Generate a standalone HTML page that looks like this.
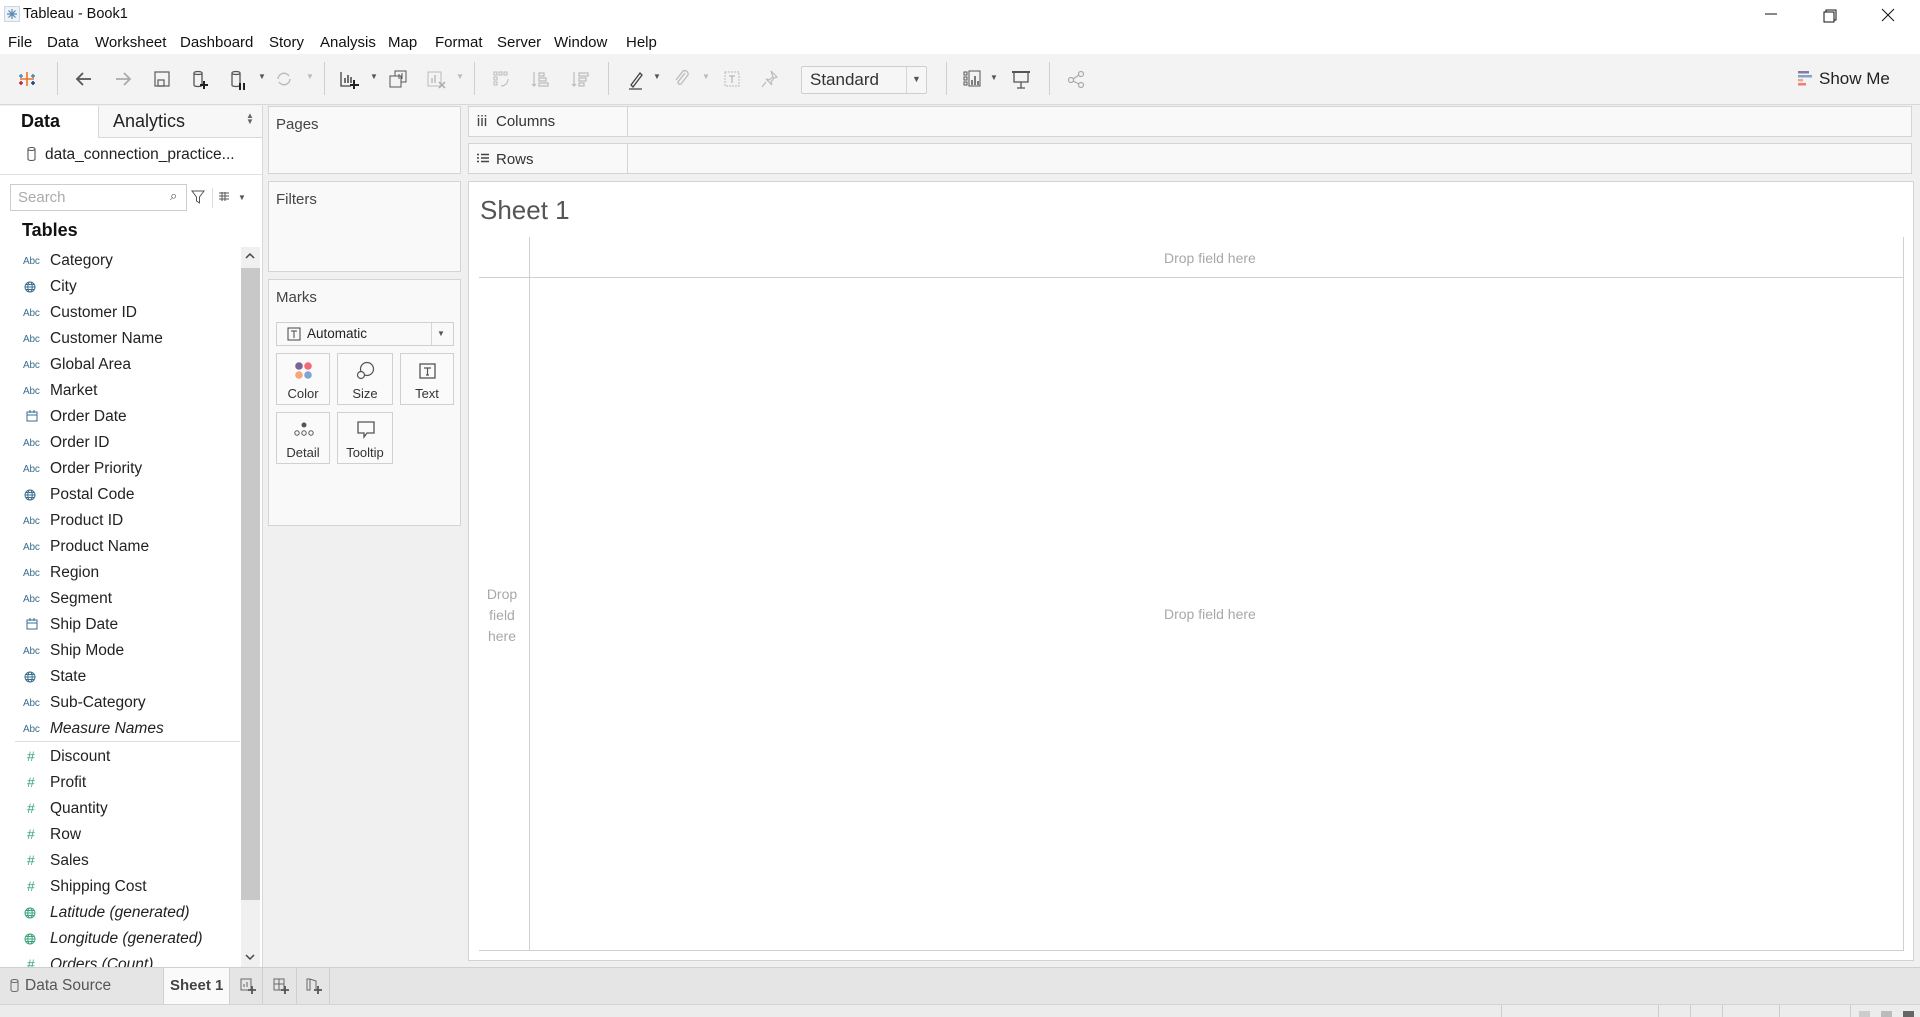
<!DOCTYPE html>
<html><head><meta charset="utf-8">
<style>
*{box-sizing:border-box;margin:0;padding:0}
body{width:1920px;height:1017px;overflow:hidden;background:#f0f0f0;font-family:"Liberation Sans",sans-serif;color:#333;position:relative}
.a{position:absolute}
.t{position:absolute;white-space:nowrap}
.menu span{position:absolute;top:34px;font-size:15px;color:#111}
.ic{position:absolute;top:69px}
.sep{position:absolute;top:62px;width:1px;height:33px;background:#cfcfcf}
.f{position:absolute;left:0;width:240px;height:26px;font-size:15.5px;color:#222}
.f .n{position:absolute;left:50px;top:4px}
.f .i{position:absolute;left:23px;top:8px;font-size:10px;color:#3b6e8f;letter-spacing:-.2px}
.f.m .i{color:#3aa57a;font-size:14px;top:4px;left:27px;font-weight:normal}
.it .n{font-style:italic}
.btn{position:absolute;background:#fafafa;border:1px solid #d0d0d0;width:54px;height:52px;font-size:13px;text-align:center}
.btn span{position:absolute;left:0;right:0;top:32px}
.drop{position:absolute;font-size:14px;color:#a8a8a8}
</style></head><body>
<!-- title bar -->
<div class="a" style="left:0;top:0;width:1920px;height:54px;background:#fff"></div>
<svg class="a" style="left:4px;top:6px" width="16" height="16"><rect x="0.5" y="0.5" width="15" height="15" fill="#eef3f8" stroke="#c9d6e2"/><g stroke="#5b87b5" stroke-width="1.2"><path d="M8 3v10M3 8h10M4.5 4.5l7 7M11.5 4.5l-7 7"/></g></svg>
<div class="t" style="left:23px;top:6px;font-size:14.5px;color:#111">Tableau - Book1</div>
<svg class="a" style="left:1760px;top:8px" width="150" height="16"><path d="M5 6h12" stroke="#111"/><rect x="64" y="4" width="10" height="10" fill="none" stroke="#111"/><path d="M66 4V2h10v10h-2" fill="none" stroke="#111"/><path d="M122 1l12 12M134 1l-12 12" stroke="#111"/></svg>
<div class="menu"><span style="left:8px">File</span><span style="left:47px">Data</span><span style="left:95px">Worksheet</span><span style="left:180px">Dashboard</span><span style="left:269px">Story</span><span style="left:320px">Analysis</span><span style="left:388px">Map</span><span style="left:435px">Format</span><span style="left:497px">Server</span><span style="left:554px">Window</span><span style="left:626px">Help</span></div>
<!-- toolbar -->
<div class="a" style="left:0;top:54px;width:1920px;height:51px;background:#f3f3f3;border-bottom:1px solid #d8d8d8"></div>
<svg class="ic" style="left:17px" width="20" height="20"><g stroke-width="1.6"><path d="M10 3v14M3 10h14" stroke="#e8762b"/><path d="M4 5v4M2 7h4" stroke="#5b87b5"/><path d="M16 5v4M14 7h4" stroke="#59879b"/><path d="M4 12v4M2 14h4" stroke="#c72035"/><path d="M16 12v4M14 14h4" stroke="#1f447e"/></g></svg>
<div class="sep" style="left:57px"></div>
<svg class="ic" style="left:74px" width="20" height="20"><path d="M17 10H3M9 4l-6 6 6 6" fill="none" stroke="#555" stroke-width="1.8"/></svg>
<svg class="ic" style="left:113px" width="20" height="20"><path d="M3 10h14M11 4l6 6-6 6" fill="none" stroke="#aaa" stroke-width="1.8"/></svg>
<svg class="ic" style="left:152px" width="20" height="20"><rect x="3" y="3" width="14" height="14" fill="none" stroke="#666" stroke-width="1.3"/><rect x="6" y="11" width="6" height="6" fill="none" stroke="#666" stroke-width="1.3"/></svg>
<svg class="ic" style="left:190px" width="20" height="22"><path d="M4 4v12c0 2 8 2 8 0V4c0-2-8-2-8 0zM4 4c0 2 8 2 8 0" fill="none" stroke="#555" stroke-width="1.3"/><path d="M14 12v8M10 16h8" stroke="#222" stroke-width="2"/></svg>
<svg class="ic" style="left:228px" width="20" height="22"><path d="M4 4v12c0 2 8 2 8 0V4c0-2-8-2-8 0zM4 4c0 2 8 2 8 0" fill="none" stroke="#555" stroke-width="1.3"/><path d="M12 14v7M16 14v7" stroke="#222" stroke-width="2"/></svg>
<div class="t" style="left:258px;top:72px;font-size:8px;color:#555">▼</div>
<svg class="ic" style="left:274px" width="20" height="20"><path d="M4 10a6 6 0 0 1 11-3M16 10a6 6 0 0 1-11 3" fill="none" stroke="#bbb" stroke-width="1.5"/></svg>
<div class="t" style="left:306px;top:72px;font-size:8px;color:#bbb">▼</div>
<div class="sep" style="left:324px"></div>
<svg class="ic" style="left:338px" width="22" height="22"><path d="M3 3v14h10" fill="none" stroke="#444" stroke-width="1.3"/><path d="M7 14V9M10 14V6M13 14V8" stroke="#444" stroke-width="1.5"/><path d="M16 11v9M12 16h9" stroke="#222" stroke-width="2"/></svg>
<div class="t" style="left:370px;top:72px;font-size:8px;color:#555">▼</div>
<svg class="ic" style="left:388px" width="22" height="22"><rect x="7" y="2" width="11" height="11" fill="none" stroke="#555"/><rect x="2" y="7" width="11" height="11" fill="#f3f3f3" stroke="#555"/><path d="M11 10V5M14 10V4" stroke="#555"/></svg>
<svg class="ic" style="left:426px" width="22" height="22"><rect x="2" y="3" width="13" height="14" fill="none" stroke="#bbb"/><path d="M6 14V9M9 14V6" stroke="#bbb" stroke-width="1.5"/><path d="M13 13l6 6M19 13l-6 6" stroke="#aaa" stroke-width="1.5"/></svg>
<div class="t" style="left:456px;top:72px;font-size:8px;color:#bbb">▼</div>
<div class="sep" style="left:474px"></div>
<svg class="ic" style="left:491px" width="22" height="22"><g fill="none" stroke="#bbb"><rect x="3" y="3" width="3" height="3"/><rect x="8" y="3" width="3" height="3"/><rect x="13" y="3" width="3" height="3"/><rect x="3" y="8" width="3" height="3"/><rect x="3" y="13" width="3" height="3"/><path d="M10 17c4 0 7-3 7-7"/></g></svg>
<svg class="ic" style="left:530px" width="22" height="22"><g fill="none" stroke="#bbb" stroke-width="1.2"><path d="M4 3v14M2 15l2 2 2-2"/><rect x="9" y="4" width="5" height="3"/><rect x="9" y="9" width="7" height="3"/><rect x="9" y="14" width="9" height="3"/></g></svg>
<svg class="ic" style="left:570px" width="22" height="22"><g fill="none" stroke="#bbb" stroke-width="1.2"><path d="M4 3v14M2 15l2 2 2-2"/><rect x="9" y="4" width="9" height="3"/><rect x="9" y="9" width="7" height="3"/><rect x="9" y="14" width="5" height="3"/></g></svg>
<div class="sep" style="left:608px"></div>
<svg class="ic" style="left:626px" width="22" height="22"><path d="M5 16l9-12 2 2-9 12zM3 20h13" fill="none" stroke="#444" stroke-width="1.3"/></svg>
<div class="t" style="left:653px;top:72px;font-size:8px;color:#555">▼</div>
<svg class="ic" style="left:671px" width="22" height="22"><path d="M14 4l-7 9a2 2 0 0 0 3 2l7-9a3.5 3.5 0 0 0-5-4l-7 9" fill="none" stroke="#bbb" stroke-width="1.3"/></svg>
<div class="t" style="left:702px;top:72px;font-size:8px;color:#bbb">▼</div>
<svg class="ic" style="left:722px" width="22" height="22"><rect x="3" y="3" width="14" height="14" fill="none" stroke="#bbb" stroke-dasharray="2 1"/><path d="M7 7h6M10 7v7" stroke="#aaa"/></svg>
<svg class="ic" style="left:759px" width="22" height="22"><path d="M12 2l6 6-3 1-3 4 1 3-6-6 3 1 4-3zM7 13l-4 5" fill="none" stroke="#bbb" stroke-width="1.2"/></svg>
<div class="a" style="left:801px;top:66px;width:126px;height:28px;border:1px solid #cfcfcf;background:#f6f6f6;border-radius:2px"></div>
<div class="a" style="left:906px;top:67px;width:1px;height:26px;background:#d4d4d4"></div>
<div class="t" style="left:810px;top:70px;font-size:17px;color:#333">Standard</div>
<div class="t" style="left:912px;top:74px;font-size:9px;color:#555">▼</div>
<div class="sep" style="left:946px"></div>
<svg class="ic" style="left:962px" width="22" height="22"><g fill="none" stroke="#555"><rect x="2" y="3" width="3" height="3"/><rect x="2" y="8" width="3" height="3"/><rect x="2" y="13" width="3" height="3"/><rect x="7" y="2" width="11" height="15"/></g><path d="M10 16v-5M13 16V7M16 16v-4" stroke="#555" stroke-width="1.5"/></svg>
<div class="t" style="left:990px;top:73px;font-size:8px;color:#555">▼</div>
<svg class="ic" style="left:1010px" width="22" height="22"><path d="M2 3h18" stroke="#555" stroke-width="2"/><path d="M4 3v10h14V3M11 13v6M7 19h8" fill="none" stroke="#555" stroke-width="1.3"/></svg>
<div class="sep" style="left:1049px"></div>
<svg class="ic" style="left:1066px" width="22" height="22"><g fill="none" stroke="#aaa" stroke-width="1.2"><circle cx="5" cy="11" r="2.5"/><circle cx="15" cy="5" r="2.5"/><circle cx="15" cy="16" r="2.5"/><path d="M7 10l6-4M7 12l6 3"/></g></svg>
<svg class="a" style="left:1798px;top:70px" width="15" height="16"><rect x="0" y="1" width="11" height="2.5" fill="#8a7aa0"/><rect x="0" y="5" width="14" height="2.5" fill="#7fa6d0"/><rect x="0" y="9" width="5" height="2.5" fill="#f0a878"/><rect x="0" y="13" width="8" height="2.5" fill="#f07a80"/></svg>
<div class="t" style="left:1819px;top:69px;font-size:17px;color:#222">Show Me</div>

<!-- left data pane -->
<div class="a" style="left:0;top:106px;width:263px;height:861px;background:#fff;border-right:1px solid #d8d8d8"></div>
<div class="a" style="left:98px;top:106px;width:164px;height:32px;background:#f7f7f7;border-left:1px solid #d8d8d8;border-bottom:1px solid #d8d8d8"></div>
<div class="t" style="left:21px;top:111px;font-size:18px;font-weight:bold;color:#111">Data</div>
<div class="t" style="left:113px;top:111px;font-size:18px;color:#222">Analytics</div>
<div class="t" style="left:246px;top:113px;font-size:8px;color:#666;line-height:6px">▲<br>▼</div>
<div class="a" style="left:0;top:174px;width:262px;height:1px;background:#e0e0e0"></div>
<svg class="a" style="left:26px;top:146px" width="12" height="17"><path d="M2 3v10c0 2 7 2 7 0V3c0-2-7-2-7 0zM2 3c0 2 7 2 7 0" fill="none" stroke="#555" stroke-width="1.1"/></svg>
<div class="t" style="left:45px;top:146px;font-size:15.5px;color:#222">data_connection_practice...</div>
<div class="a" style="left:10px;top:184px;width:177px;height:27px;border:1px solid #ccc;background:#fff"></div>
<div class="t" style="left:18px;top:189px;font-size:15px;color:#aaa">Search</div>
<div class="t" style="left:170px;top:188px;font-size:13px;color:#555">⌕</div>
<svg class="a" style="left:191px;top:190px" width="14" height="14"><path d="M1 1h12L8.5 7v6L5.5 11V7z" fill="none" stroke="#555"/></svg>
<div class="a" style="left:212px;top:188px;width:1px;height:20px;background:#ddd"></div>
<svg class="a" style="left:218px;top:192px" width="12" height="10"><g stroke="#555"><path d="M1 1h10M1 4h10M1 7h10M4 0v9M7 0v9"/></g></svg>
<div class="t" style="left:238px;top:193px;font-size:8px;color:#555">▼</div>
<div class="t" style="left:22px;top:220px;font-size:18px;font-weight:bold;color:#111">Tables</div>
<!-- scrollbar -->
<div class="a" style="left:241px;top:247px;width:19px;height:720px;background:#f0f0f0"></div>
<div class="a" style="left:241px;top:268px;width:19px;height:632px;background:#c8c8c8"></div>
<svg class="a" style="left:244px;top:251px" width="12" height="10"><path d="M2 7l4-4 4 4" fill="none" stroke="#444" stroke-width="1.5"/></svg>
<svg class="a" style="left:244px;top:952px" width="12" height="10"><path d="M2 3l4 4 4-4" fill="none" stroke="#444" stroke-width="1.5"/></svg>
<div class="f" style="top:248px"><span class="i">Abc</span><span class="n">Category</span></div>
<div class="f" style="top:274px"><svg class="a" style="left:24px;top:7px" width="12" height="12"><g fill="none" stroke="#3b6e8f"><circle cx="6" cy="6" r="5"/><ellipse cx="6" cy="6" rx="2.2" ry="5"/><path d="M1 6h10M2 3.5h8M2 8.5h8"/></g></svg><span class="n">City</span></div>
<div class="f" style="top:300px"><span class="i">Abc</span><span class="n">Customer ID</span></div>
<div class="f" style="top:326px"><span class="i">Abc</span><span class="n">Customer Name</span></div>
<div class="f" style="top:352px"><span class="i">Abc</span><span class="n">Global Area</span></div>
<div class="f" style="top:378px"><span class="i">Abc</span><span class="n">Market</span></div>
<div class="f" style="top:404px"><svg class="a" style="left:26px;top:6px" width="12" height="12"><rect x="1" y="2" width="10" height="9" fill="none" stroke="#3b6e8f"/><path d="M1 5h10M4 0v3M8 0v3" stroke="#3b6e8f"/></svg><span class="n">Order Date</span></div>
<div class="f" style="top:430px"><span class="i">Abc</span><span class="n">Order ID</span></div>
<div class="f" style="top:456px"><span class="i">Abc</span><span class="n">Order Priority</span></div>
<div class="f" style="top:482px"><svg class="a" style="left:24px;top:7px" width="12" height="12"><g fill="none" stroke="#3b6e8f"><circle cx="6" cy="6" r="5"/><ellipse cx="6" cy="6" rx="2.2" ry="5"/><path d="M1 6h10M2 3.5h8M2 8.5h8"/></g></svg><span class="n">Postal Code</span></div>
<div class="f" style="top:508px"><span class="i">Abc</span><span class="n">Product ID</span></div>
<div class="f" style="top:534px"><span class="i">Abc</span><span class="n">Product Name</span></div>
<div class="f" style="top:560px"><span class="i">Abc</span><span class="n">Region</span></div>
<div class="f" style="top:586px"><span class="i">Abc</span><span class="n">Segment</span></div>
<div class="f" style="top:612px"><svg class="a" style="left:26px;top:6px" width="12" height="12"><rect x="1" y="2" width="10" height="9" fill="none" stroke="#3b6e8f"/><path d="M1 5h10M4 0v3M8 0v3" stroke="#3b6e8f"/></svg><span class="n">Ship Date</span></div>
<div class="f" style="top:638px"><span class="i">Abc</span><span class="n">Ship Mode</span></div>
<div class="f" style="top:664px"><svg class="a" style="left:24px;top:7px" width="12" height="12"><g fill="none" stroke="#3b6e8f"><circle cx="6" cy="6" r="5"/><ellipse cx="6" cy="6" rx="2.2" ry="5"/><path d="M1 6h10M2 3.5h8M2 8.5h8"/></g></svg><span class="n">State</span></div>
<div class="f" style="top:690px"><span class="i">Abc</span><span class="n">Sub-Category</span></div>
<div class="f it" style="top:716px"><span class="i">Abc</span><span class="n">Measure Names</span></div>
<div class="a" style="left:15px;top:741px;width:225px;height:1px;background:#ddd"></div>
<div class="f m" style="top:744px"><span class="i">#</span><span class="n">Discount</span></div>
<div class="f m" style="top:770px"><span class="i">#</span><span class="n">Profit</span></div>
<div class="f m" style="top:796px"><span class="i">#</span><span class="n">Quantity</span></div>
<div class="f m" style="top:822px"><span class="i">#</span><span class="n">Row</span></div>
<div class="f m" style="top:848px"><span class="i">#</span><span class="n">Sales</span></div>
<div class="f m" style="top:874px"><span class="i">#</span><span class="n">Shipping Cost</span></div>
<div class="f it" style="top:900px"><svg class="a" style="left:24px;top:7px" width="12" height="12"><g fill="none" stroke="#3aa57a"><circle cx="6" cy="6" r="5"/><ellipse cx="6" cy="6" rx="2.2" ry="5"/><path d="M1 6h10M2 3.5h8M2 8.5h8"/></g></svg><span class="n">Latitude (generated)</span></div>
<div class="f it" style="top:926px"><svg class="a" style="left:24px;top:7px" width="12" height="12"><g fill="none" stroke="#3aa57a"><circle cx="6" cy="6" r="5"/><ellipse cx="6" cy="6" rx="2.2" ry="5"/><path d="M1 6h10M2 3.5h8M2 8.5h8"/></g></svg><span class="n">Longitude (generated)</span></div>
<div class="a" style="left:0;top:952px;width:240px;height:15px;overflow:hidden"><div class="f m it" style="top:0"><span class="i">#</span><span class="n">Orders (Count)</span></div></div>

<!-- pages / filters / marks -->
<div class="a" style="left:268px;top:106px;width:193px;height:68px;background:#f9f9f9;border:1px solid #d4d4d4"></div>
<div class="t" style="left:276px;top:116px;font-size:15px;color:#444">Pages</div>
<div class="a" style="left:268px;top:181px;width:193px;height:91px;background:#f9f9f9;border:1px solid #d4d4d4"></div>
<div class="t" style="left:276px;top:191px;font-size:15px;color:#444">Filters</div>
<div class="a" style="left:268px;top:279px;width:193px;height:247px;background:#f9f9f9;border:1px solid #d4d4d4"></div>
<div class="t" style="left:276px;top:289px;font-size:15px;color:#444">Marks</div>
<div class="a" style="left:276px;top:322px;width:178px;height:24px;border:1px solid #d0d0d0;background:#f9f9f9"></div>
<div class="a" style="left:431px;top:323px;width:1px;height:22px;background:#d4d4d4"></div>
<svg class="a" style="left:287px;top:327px" width="14" height="14"><rect x="1" y="1" width="12" height="12" fill="none" stroke="#444"/><path d="M4 4h6M7 4v7" stroke="#444"/></svg>
<div class="t" style="left:307px;top:326px;font-size:13.5px;color:#222">Automatic</div>
<div class="t" style="left:437px;top:329px;font-size:8px;color:#555">▼</div>
<div class="btn" style="left:276px;top:353px"><svg class="a" style="left:17px;top:7px" width="20" height="20"><circle cx="5" cy="5" r="3.8" fill="#7b6494"/><circle cx="14" cy="5" r="3.8" fill="#f26a78"/><circle cx="5" cy="14" r="3.8" fill="#f5a77a"/><circle cx="14" cy="14" r="3.8" fill="#7fa6d0"/></svg><span>Color</span></div>
<div class="btn" style="left:337px;top:353px;width:56px"><svg class="a" style="left:18px;top:7px" width="20" height="20"><circle cx="11" cy="8" r="6.5" fill="none" stroke="#555" stroke-width="1.2"/><circle cx="5" cy="14" r="3.5" fill="#f9f9f9" stroke="#555" stroke-width="1.2"/></svg><span>Size</span></div>
<div class="btn" style="left:400px;top:353px"><svg class="a" style="left:17px;top:8px" width="20" height="20"><rect x="2" y="2" width="15" height="14" fill="none" stroke="#555" stroke-width="1.3"/><path d="M6 6h7M9.5 6v7M8 13h3" stroke="#555" stroke-width="1.2"/></svg><span>Text</span></div>
<div class="btn" style="left:276px;top:412px"><svg class="a" style="left:15px;top:8px" width="24" height="18"><circle cx="12" cy="4" r="2.5" fill="#555"/><g fill="none" stroke="#555"><circle cx="5" cy="12" r="2.2"/><circle cx="12" cy="12" r="2.2"/><circle cx="19" cy="12" r="2.2"/></g></svg><span>Detail</span></div>
<div class="btn" style="left:337px;top:412px;width:56px"><svg class="a" style="left:18px;top:7px" width="20" height="20"><path d="M2 2h16v11h-7l-3 4v-4H2z" fill="none" stroke="#555" stroke-width="1.3"/></svg><span>Tooltip</span></div>

<!-- columns / rows -->
<div class="a" style="left:468px;top:106px;width:1444px;height:31px;background:#f9f9f9;border:1px solid #d4d4d4"></div>
<div class="a" style="left:627px;top:106px;width:1px;height:31px;background:#d4d4d4"></div>
<svg class="a" style="left:477px;top:115px" width="10" height="11"><path d="M1.5 3v8M5 3v8M8.5 3v8" stroke="#444" stroke-width="1.4"/><path d="M1.5 0v1.5M5 0v1.5M8.5 0v1.5" stroke="#444" stroke-width="1.4"/></svg>
<div class="t" style="left:496px;top:113px;font-size:15px;color:#333">Columns</div>
<div class="a" style="left:468px;top:143px;width:1444px;height:31px;background:#f9f9f9;border:1px solid #d4d4d4"></div>
<div class="a" style="left:627px;top:143px;width:1px;height:31px;background:#d4d4d4"></div>
<svg class="a" style="left:477px;top:153px" width="12" height="11"><path d="M0 1.5h2M4 1.5h8M0 5h2M4 5h8M0 8.5h2M4 8.5h8" stroke="#444" stroke-width="1.4"/></svg>
<div class="t" style="left:496px;top:151px;font-size:15px;color:#333">Rows</div>

<!-- sheet -->
<div class="a" style="left:468px;top:181px;width:1446px;height:780px;background:#fff;border:1px solid #d4d4d4"></div>
<div class="t" style="left:480px;top:195px;font-size:26px;color:#555;font-weight:300">Sheet 1</div>
<div class="a" style="left:529px;top:237px;width:1px;height:714px;background:#d0d0d0"></div>
<div class="a" style="left:479px;top:277px;width:1425px;height:1px;background:#d0d0d0"></div>
<div class="a" style="left:479px;top:950px;width:1425px;height:1px;background:#d0d0d0"></div>
<div class="a" style="left:1903px;top:237px;width:1px;height:714px;background:#d0d0d0"></div>
<div class="drop" style="left:1164px;top:250px">Drop field here</div>
<div class="drop" style="left:1164px;top:606px">Drop field here</div>
<div class="drop" style="left:484px;top:584px;width:36px;text-align:center;line-height:21px">Drop<br>field<br>here</div>

<!-- bottom tabs -->
<div class="a" style="left:0;top:967px;width:1920px;height:37px;background:#e5e5e5;border-top:1px solid #cfcfcf"></div>
<svg class="a" style="left:10px;top:979px" width="10" height="14"><path d="M1 2v9c0 2 7 2 7 0V2c0-2-7-2-7 0zM1 2c0 2 7 2 7 0" fill="none" stroke="#666"/></svg>
<div class="t" style="left:25px;top:977px;font-size:15.5px;color:#555">Data Source</div>
<div class="a" style="left:163px;top:968px;width:67px;height:36px;background:#fafafa;border-left:1px solid #d0d0d0;border-right:1px solid #d0d0d0"></div>
<div class="t" style="left:170px;top:977px;font-size:15px;font-weight:bold;color:#444">Sheet 1</div>
<div class="a" style="left:262px;top:968px;width:1px;height:36px;background:#d0d0d0"></div>
<div class="a" style="left:296px;top:968px;width:1px;height:36px;background:#d0d0d0"></div>
<div class="a" style="left:329px;top:968px;width:1px;height:36px;background:#d0d0d0"></div>
<svg class="a" style="left:240px;top:978px" width="16" height="16"><rect x="1" y="1" width="10" height="11" fill="none" stroke="#666"/><path d="M4 9V6M7 9V4" stroke="#666"/><path d="M12 8v8M8 12h8" stroke="#555" stroke-width="1.8"/></svg>
<svg class="a" style="left:273px;top:978px" width="16" height="16"><rect x="1" y="1" width="10" height="11" fill="none" stroke="#666"/><path d="M6 1v11M1 6h10" stroke="#666"/><path d="M12 8v8M8 12h8" stroke="#555" stroke-width="1.8"/></svg>
<svg class="a" style="left:306px;top:978px" width="16" height="16"><path d="M1 1h3v11H1zM4 1l6 2v8" fill="none" stroke="#666"/><path d="M12 8v8M8 12h8" stroke="#555" stroke-width="1.8"/></svg>
<!-- status -->
<div class="a" style="left:0;top:1004px;width:1920px;height:13px;background:#ececec;border-top:1px solid #d4d4d4"></div>
<div class="a" style="left:1501px;top:1005px;width:1px;height:12px;background:#ccc"></div>
<div class="a" style="left:1658px;top:1005px;width:1px;height:12px;background:#ccc"></div>
<div class="a" style="left:1690px;top:1005px;width:1px;height:12px;background:#ccc"></div>
<div class="a" style="left:1722px;top:1005px;width:1px;height:12px;background:#ccc"></div>
<div class="a" style="left:1779px;top:1005px;width:1px;height:12px;background:#ccc"></div>
<div class="a" style="left:1850px;top:1005px;width:1px;height:12px;background:#ccc"></div>
<div class="a" style="left:1859px;top:1011px;width:11px;height:6px;background:#ccc"></div>
<div class="a" style="left:1881px;top:1011px;width:11px;height:6px;background:#bbb"></div>
<div class="a" style="left:1903px;top:1011px;width:11px;height:6px;background:#666"></div>
</body></html>
